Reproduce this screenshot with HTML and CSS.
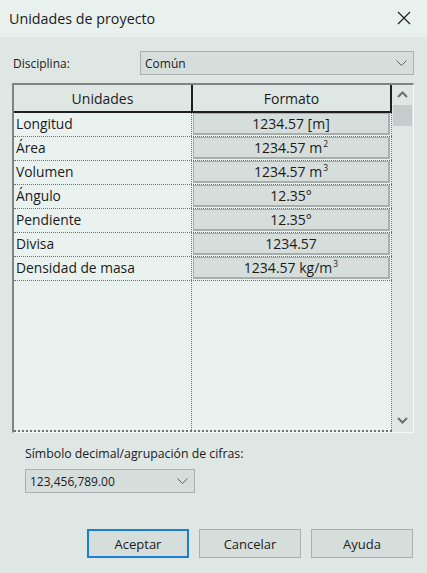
FILE: index.html
```html
<!DOCTYPE html>
<html lang="es">
<head>
<meta charset="utf-8">
<title>Unidades de proyecto</title>
<link rel="stylesheet" href="styles.css">
</head>
<body>
<div class="dialog">
  <div class="titlebar">
    <span class="title">Unidades de proyecto</span>
    <svg class="close" width="14" height="14" viewBox="0 0 14 14"><path d="M1 1 L13 13 M13 1 L1 13" stroke="#1b1b1b" stroke-width="1.1" fill="none"/></svg>
  </div>
  <div class="body">
    <div class="field">
      <label class="label">Disciplina:</label>
      <div class="select wide"><span>Común</span><svg class="chev" width="11" height="7" viewBox="0 0 11 7"><path d="M0.5 0.5 L5.5 5.5 L10.5 0.5" stroke="#5c6361" stroke-width="1" fill="none"/></svg></div>
    </div>

    <div class="grid-frame">
      <div class="grid">
        <div class="head">
          <div class="hcell c1">Unidades</div>
          <div class="hcell c2">Formato</div>
        </div>
        <div class="rows">
          <div class="row"><div class="name">Longitud</div><div class="fmt"><span class="btn">1234.57 [m]</span></div></div>
          <div class="row"><div class="name">Área</div><div class="fmt"><span class="btn">1234.57 m<sup>2</sup></span></div></div>
          <div class="row"><div class="name">Volumen</div><div class="fmt"><span class="btn">1234.57 m<sup>3</sup></span></div></div>
          <div class="row"><div class="name">Ángulo</div><div class="fmt"><span class="btn">12.35°</span></div></div>
          <div class="row"><div class="name">Pendiente</div><div class="fmt"><span class="btn">12.35°</span></div></div>
          <div class="row"><div class="name">Divisa</div><div class="fmt"><span class="btn">1234.57</span></div></div>
          <div class="row"><div class="name">Densidad de masa</div><div class="fmt"><span class="btn">1234.57 kg/m<sup>3</sup></span></div></div>
          <div class="row filler"><div class="name"></div><div class="fmt"></div></div>
        </div>
      </div>
      <div class="scrollbar">
        <svg class="arrow" width="11" height="7" viewBox="0 0 11 7"><path d="M1 6 L5.5 1.5 L10 6" stroke="#6a7170" stroke-width="2" fill="none"/></svg>
        <div class="thumb"></div>
        <div class="track"></div>
        <svg class="arrow" width="11" height="7" viewBox="0 0 11 7"><path d="M1 1 L5.5 5.5 L10 1" stroke="#6a7170" stroke-width="2" fill="none"/></svg>
      </div>
    </div>

    <div class="sep-field">
      <div class="label">Símbolo decimal/agrupación de cifras:</div>
      <div class="select narrow"><span>123,456,789.00</span><svg class="chev" width="11" height="7" viewBox="0 0 11 7"><path d="M0.5 0.5 L5.5 5.5 L10.5 0.5" stroke="#5c6361" stroke-width="1" fill="none"/></svg></div>
    </div>

    <div class="buttons">
      <button class="button default">Aceptar</button>
      <button class="button">Cancelar</button>
      <button class="button">Ayuda</button>
    </div>
  </div>
</div>
</body>
</html>
```

FILE: styles.css
```css
* { box-sizing: border-box; }

html, body {
  margin: 0;
  padding: 0;
  width: 427px;
  height: 573px;
  overflow: hidden;
  background: #dfe7e5;
  font-family: "Open Sans", "Noto Sans", sans-serif;
  color: #1b1b1b;
}

.dialog {
  width: 427px;
  height: 573px;
  display: flex;
  flex-direction: column;
}

.titlebar {
  height: 37px;
  background: #e9f1ef;
  display: flex;
  align-items: center;
  justify-content: space-between;
  padding: 0 16px 0 9px;
}

.title {
  font-size: 14.3px;
  margin-top: -1px;
}

.close { display: block; margin-top: -1px; }

.body {
  padding: 14px 13px 0 12px;
  font-size: 13px;
}

.field {
  display: flex;
  align-items: center;
  height: 24px;
  padding-left: 1px;
}

.field .label { width: 127px; font-size: 12px; }

.select {
  height: 24px;
  border: 1px solid #a9b0ae;
  background: #d6dedc;
  display: flex;
  align-items: center;
  justify-content: space-between;
  padding: 0 6px 0 4px;
  font-size: 12px;
}

.select.wide { flex: 1; }
.select.narrow { width: 170px; margin-top: 7px; }
.chev { display: block; }

.grid-frame {
  margin-top: 8px;
  height: 350px;
  display: flex;
  border-top: 2px solid #7e8584;
  border-left: 2px solid #7e8584;
  border-right: 1px solid #f4f8f7;
  border-bottom: 1px solid #f4f8f7;
  background: #eaf2f0;
}

.grid {
  width: 378px;
  display: flex;
  flex-direction: column;
  border-bottom: 2px dotted #6e7473;
}

.head {
  display: flex;
  height: 28px;
  background: #dfe7e5;
  border-bottom: 2px solid #1f1f1f;
}

.hcell {
  display: flex;
  align-items: center;
  justify-content: center;
  font-size: 14px;
}

.hcell.c1 { width: 179px; border-right: 2px solid #1f1f1f; }
.hcell.c2 { flex: 1; border-right: 2px solid #1f1f1f; }

.rows {
  flex: 1;
  display: flex;
  flex-direction: column;
}

.row {
  display: flex;
  height: 24px;
  border-bottom: 1px dotted #6e7473;
}

.row.filler { flex: 1; border-bottom: none; }

.name {
  width: 178px;
  border-right: 1px dotted #6e7473;
  padding: 0 0 2px 2px;
  display: flex;
  align-items: center;
  font-size: 13.8px;
}

.fmt {
  flex: 1;
  border-right: 1px dotted #6e7473;
  padding: 0 1px 1px 1px;
  display: flex;
}

/* value cell drawn as a flat button */
.btn {
  flex: 1;
  display: block;
  background: #d6dedc;
  border: 2px solid #a7aeac;
  border-left-width: 1px;
  border-top-width: 1px;
  text-align: center;
  font-size: 14px;
  line-height: 19px;
}

.btn sup {
  font-size: 8.5px;
  line-height: 0;
  vertical-align: 6px;
  margin-left: 1px;
}

.scrollbar {
  flex: 1;
  display: flex;
  flex-direction: column;
  align-items: center;
  background: #dfe7e5;
  padding: 6px 0 8px 0;
}

.arrow { display: block; }

.thumb {
  width: 19px;
  height: 21px;
  background: #c5cccb;
  margin-top: 7px;
}

.track { flex: 1; }

.sep-field {
  padding-left: 13px;
  margin-top: 12px;
}

.sep-field .label { font-size: 12.3px; }

.buttons {
  display: flex;
  justify-content: flex-end;
  gap: 10px;
  margin-top: 36px;
  padding-right: 1px;
}

.button {
  width: 102px;
  height: 29px;
  background: #d6dedc;
  border: 1px solid #a9b0ae;
  font-family: inherit;
  font-size: 13px;
  color: #1b1b1b;
  padding: 0;
}

.button.default {
  border: 2px solid #1a7fd4;
}
```
